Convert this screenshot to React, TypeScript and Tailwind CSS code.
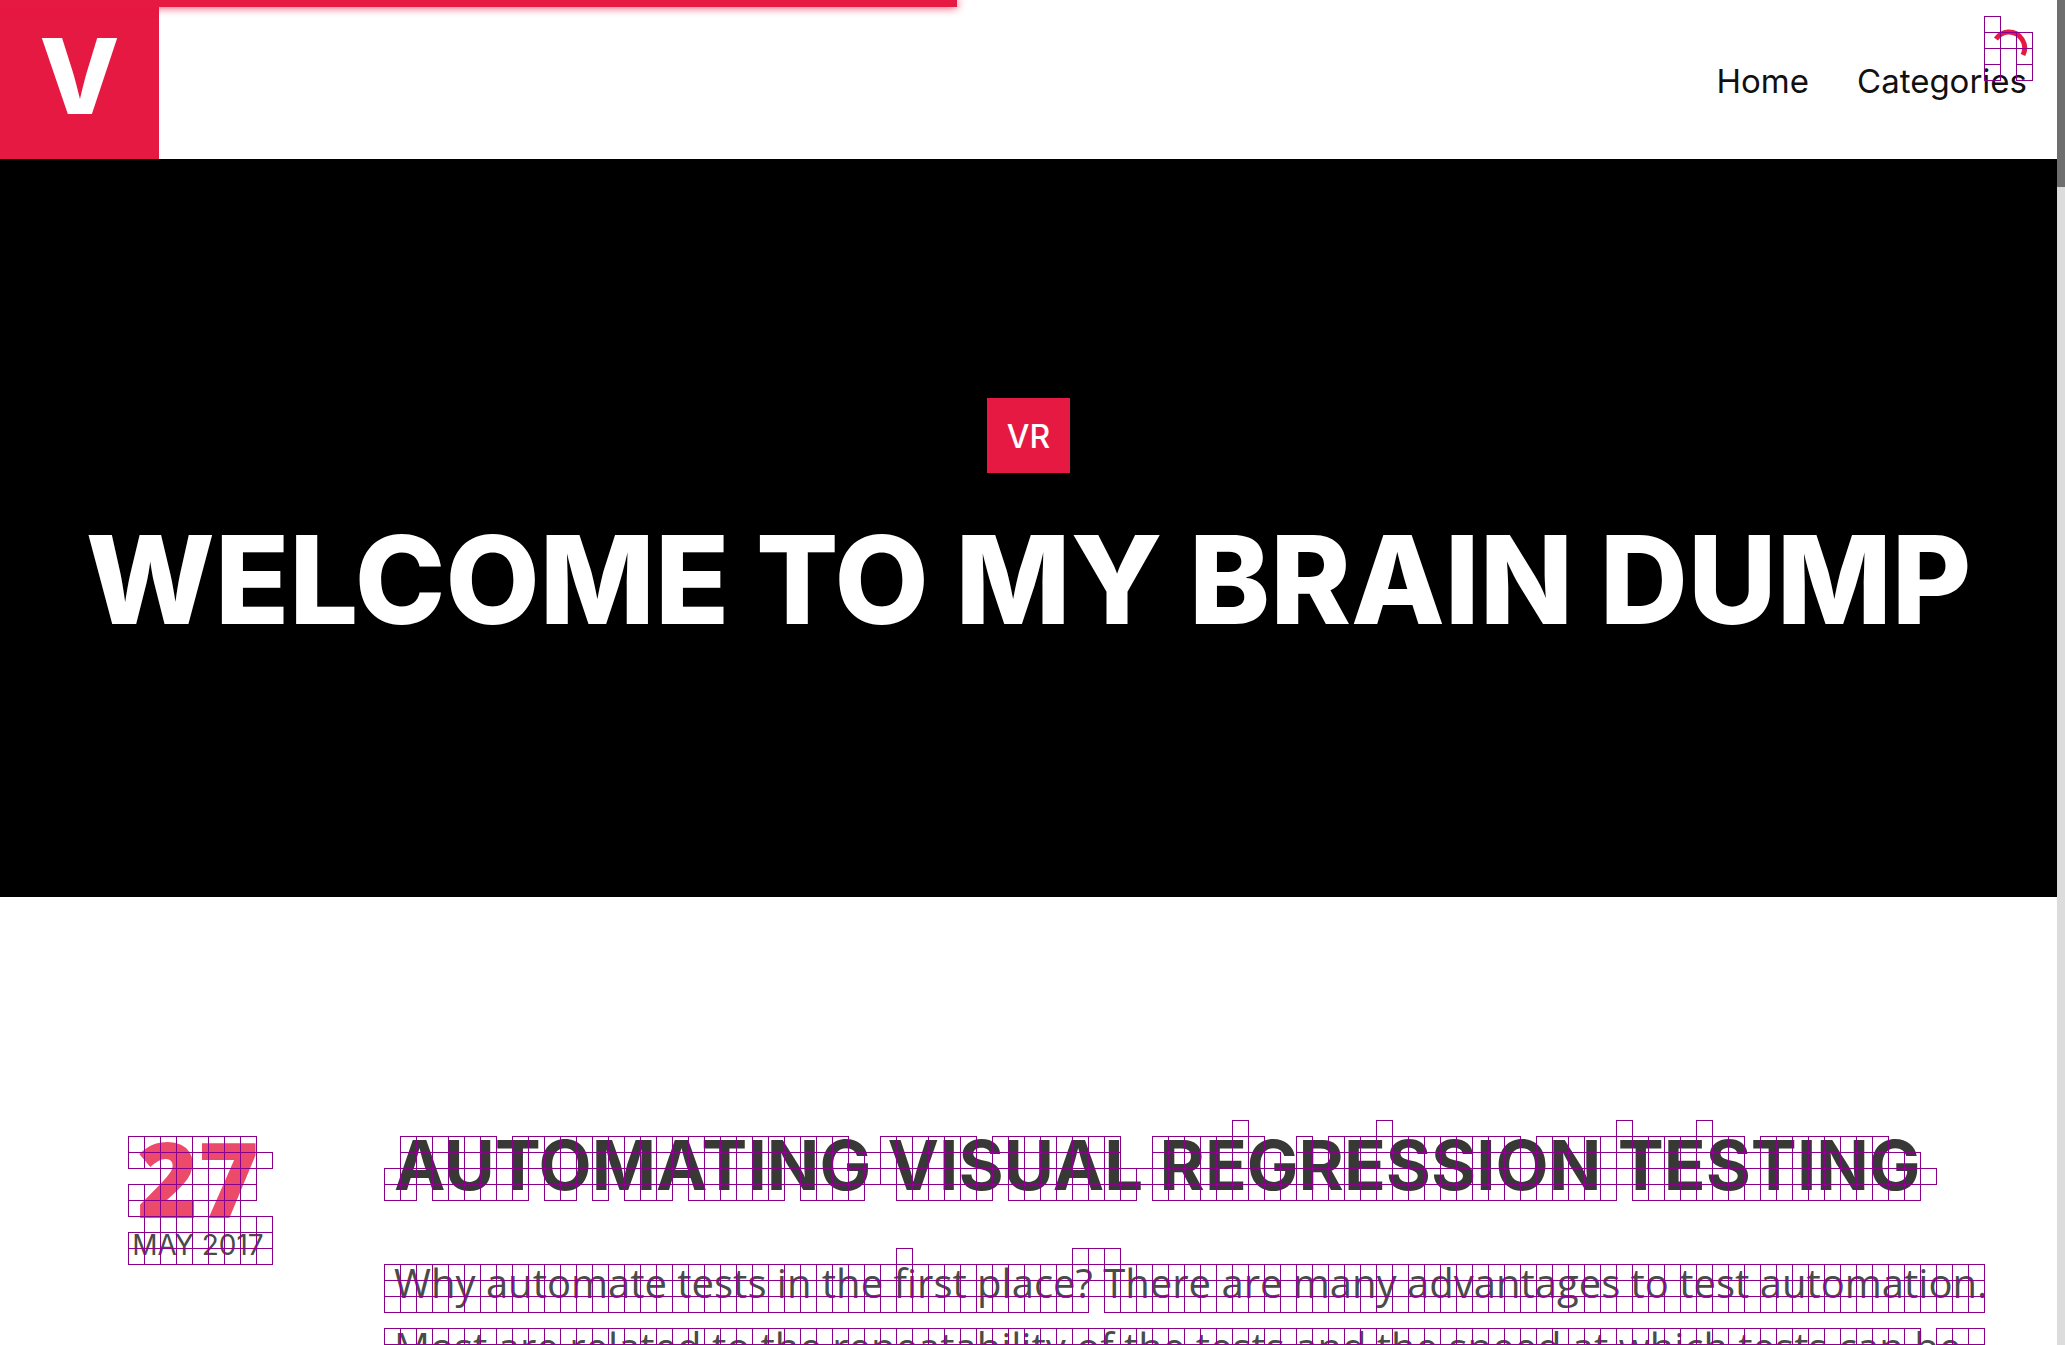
import React from "react";

const CELL = 16;

type Span = [number, number];

type Block = { x: number; rows: [number, Span[]][] };

const blocks: Block[] = [
  {
    x: 1984,
    rows: [
      [16, [[0, 0]]],
      [32, [[0, 2]]],
      [48, [[0, 0], [2, 2]]],
      [64, [[0, 0], [2, 2]]],
    ],
  },
  {
    x: 128,
    rows: [
      [1136, [[0, 7]]],
      [1152, [[0, 8]]],
      [1168, [[2, 7]]],
      [1184, [[0, 7]]],
      [1200, [[0, 6]]],
      [1216, [[1, 5], [7, 8]]],
      [1232, [[0, 8]]],
      [1248, [[0, 8]]],
    ],
  },
  {
    x: 384,
    rows: [
      [1120, [[53, 53], [62, 62], [77, 77], [82, 82]]],
      [1136, [[1, 6], [8, 28], [31, 36], [38, 45], [48, 54], [57, 57], [59, 70], [72, 84], [86, 93]]],
      [1152, [[1, 45], [48, 55], [57, 95]]],
      [1168, [[0, 96]]],
      [
        1184,
        [[0, 1], [3, 8], [10, 11], [13, 13], [15, 17], [19, 24], [26, 29], [32, 37], [39, 46], [48, 76], [78, 95]],
      ],
      [1248, [[32, 32], [43, 45]]],
      [1264, [[0, 99]]],
      [1280, [[0, 99]]],
      [1296, [[0, 43], [45, 99]]],
      [1328, [[0, 95], [97, 99]]],
    ],
  },
];

function cellPath(): string {
  let d = "";
  for (const block of blocks) {
    for (const [y, spans] of block.rows) {
      for (const [from, to] of spans) {
        for (let c = from; c <= to; c++) {
          d += `M${block.x + c * CELL + 0.5} ${y + 0.5}h${CELL}v${CELL}h-${CELL}z`;
        }
      }
    }
  }
  return d;
}

function ChangedCells() {
  return (
    <svg
      aria-hidden="true"
      className="pointer-events-none absolute left-0 top-0 h-[1345px] w-[2065px]"
      viewBox="0 0 2065 1345"
      shapeRendering="crispEdges"
    >
      <path d={cellPath()} fill="none" stroke="#8b008b" strokeWidth="1" />
    </svg>
  );
}

function Spinner() {
  return (
    <svg aria-hidden="true" className="absolute right-[37px] top-[28px] h-10 w-10" viewBox="0 0 40 40">
      <path
        d="M8 11A16 16 0 0 1 20 4A16 16 0 0 1 35 27"
        fill="none"
        stroke="#e61942"
        strokeWidth="5"
      />
    </svg>
  );
}

function Header() {
  return (
    <header className="flex h-[159px] items-stretch justify-between bg-white">
      <a
        href="#home"
        className="flex w-[159px] items-center justify-center bg-[#e61942] pb-2 text-[104px] font-extrabold leading-none text-white"
      >
        V
      </a>
      <nav className="flex items-center gap-12 pr-[30px] pt-0.5 text-[33px] leading-10 text-[#111]">
        <a href="#home">Home</a>
        <a href="#categories">Categories</a>
      </nav>
    </header>
  );
}

function Hero() {
  return (
    <section className="flex h-[738px] flex-col items-center bg-black pt-[239px] text-white">
      <a
        href="#vr"
        className="flex h-[75px] items-center bg-[#e61942] px-5 pt-0.5 text-[32px] font-medium leading-none"
      >
        VR
      </a>
      <h1 className="mt-[45px] whitespace-nowrap text-[122px] font-extrabold leading-[124px]">
        WELCOME TO MY BRAIN DUMP
      </h1>
    </section>
  );
}

function Post() {
  return (
    <article className="flex pl-[128px] pr-[60px] pt-[222px]">
      <time dateTime="2017-05-27" className="flex w-[140px] shrink-0 flex-col items-center pt-2">
        <span className="font-['Open_Sans'] text-[104px] font-extrabold leading-[102px] text-[#ec4a6a]">27</span>
        <span className="whitespace-nowrap text-[28px] leading-8 text-[#4a4a4a]">MAY 2017</span>
      </time>
      <div className="ml-[126px] min-w-0 flex-1 pt-1">
        <h2 className="whitespace-nowrap text-[69px] font-bold leading-[84px] text-[#383838]">
          AUTOMATING VISUAL REGRESSION TESTING
        </h2>
        <p className="mt-11 font-['Open_Sans'] text-[40px] leading-[64px] text-[#4a4a4a]">
          Why automate tests in the first place? There are many advantages to test automation. Most are related to the
          repeatability of the tests and the speed at which tests can be
        </p>
      </div>
    </article>
  );
}

export default function App() {
  return (
    <div className="relative flex h-screen overflow-hidden bg-white font-['Inter',sans-serif]">
      <main className="min-w-0 flex-1">
        <Header />
        <Hero />
        <Post />
      </main>
      <div aria-hidden="true" className="w-2 bg-[#dcdcdc]">
        <div className="h-[187px] bg-[#6e6e6e]" />
      </div>
      <div className="absolute left-0 top-0 h-[7px] w-[957px] bg-[#e61942] shadow-[0_0_10px_#e61942]" />
      <Spinner />
      <ChangedCells />
    </div>
  );
}
